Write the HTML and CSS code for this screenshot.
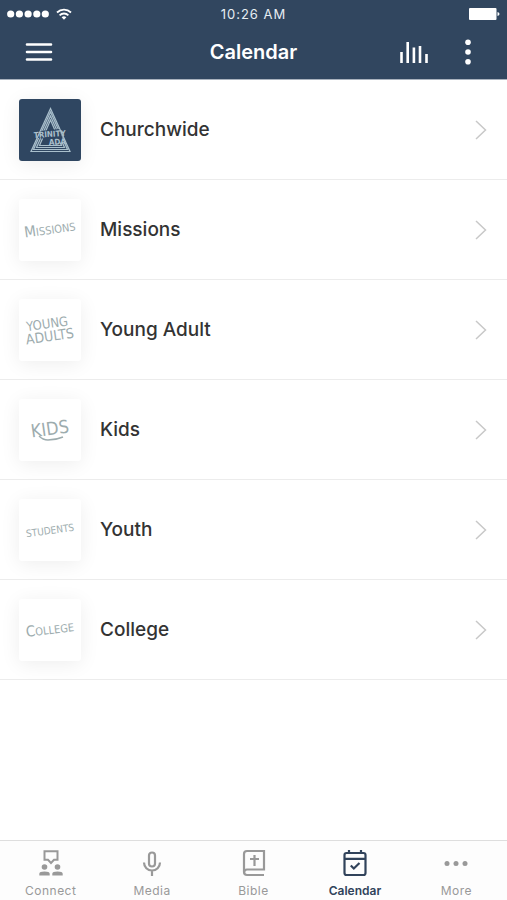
FILE: index.html
```
<!DOCTYPE html>
<html lang="en">
<head>
<meta charset="UTF-8">
<meta name="viewport" content="width=device-width, initial-scale=1.0">
<title>Calendar</title>
<link rel="stylesheet" href="styles.css">
</head>
<body>
<header class="header">
    <div class="status-bar">
        <div class="signal">
            <svg width="42" height="8" viewBox="0 0 42 8" fill="currentColor" aria-hidden="true">
                <circle cx="3.7" cy="4" r="3.6"/><circle cx="12.4" cy="4" r="3.6"/><circle cx="21.1" cy="4" r="3.6"/><circle cx="29.8" cy="4" r="3.6"/><circle cx="38.3" cy="4" r="3.6"/>
            </svg>
            <svg width="16" height="12" viewBox="0 0 16 12" fill="none" stroke="currentColor" stroke-width="1.8" aria-hidden="true">
                <path d="M1 4.5a10.2 10.2 0 0 1 14 0M3.6 7.3a6.3 6.3 0 0 1 8.8 0"/>
                <path d="M8 11.7L5.6 9.2a3.6 3.6 0 0 1 4.8 0z" fill="currentColor" stroke="none"/>
            </svg>
        </div>
        <span class="time">10:26 AM</span>
        <svg class="battery" width="31" height="12" viewBox="0 0 31 12" fill="currentColor" aria-hidden="true">
            <rect width="27.5" height="12" rx="1"/><path d="M28.5 4q2 .5 2 2t-2 2z"/>
        </svg>
    </div>
    <div class="title-bar">
        <button type="button" class="icon-button" aria-label="Menu">
            <svg width="28" height="20" viewBox="0 0 28 20" stroke="currentColor" stroke-width="2.6" stroke-linecap="round"><path d="M2 2.5h24M2 10h24M2 17.5h24"/></svg>
        </button>
        <h1>Calendar</h1>
        <div class="actions">
            <button type="button" class="icon-button" aria-label="Audio player">
                <svg width="28" height="22" viewBox="0 0 28 22" stroke="currentColor" stroke-width="2.6"><path d="M1.5 11v11M7.7 1v21M13.9 6.5V22M20 5v17M26.5 13v9"/></svg>
            </button>
            <button type="button" class="icon-button" aria-label="Options">
                <svg width="8" height="26" viewBox="0 0 8 26" fill="currentColor"><circle cx="4" cy="3.3" r="2.8"/><circle cx="4" cy="13" r="2.8"/><circle cx="4" cy="22.7" r="2.8"/></svg>
            </button>
        </div>
    </div>
</header>

<main>
    <ul class="list">
        <li><a class="row" href="#churchwide">
            <svg class="thumb thumb-dark" viewBox="0 0 62 62" aria-hidden="true">
                <g fill="none" stroke="#a9bfcc" stroke-width="1.2">
                    <path d="M31.5 9.5L12 52.5H51zM31.5 13L14.5 50.5H48.5zM31.5 17L17.5 48.5H45.5zM31.5 21L20.5 46.5H42.5z"/>
                </g>
                <path class="thumb-band" d="M22 32l18-2 5 13-15 2-2-5-9-1z"/>
                <text class="logo-text" x="15" y="39" transform="rotate(-4 15 39)">TRINITY</text>
                <text class="logo-text" x="30" y="46" transform="rotate(-3 30 46)">ADA</text>
            </svg>
            <span class="name">Churchwide</span>
            <svg class="chevron" width="12" height="20" viewBox="0 0 12 20"><path d="M1 1l9.5 9L1 19"/></svg>
        </a></li>
        <li><a class="row" href="#missions">
            <svg class="thumb" viewBox="0 0 62 62" aria-hidden="true">
                <text x="31" y="35" transform="rotate(-8 31 31)"><tspan class="initial">M</tspan>ISSIONS</text>
            </svg>
            <span class="name">Missions</span>
            <svg class="chevron" width="12" height="20" viewBox="0 0 12 20"><path d="M1 1l9.5 9L1 19"/></svg>
        </a></li>
        <li><a class="row" href="#young-adult">
            <svg class="thumb" viewBox="0 0 62 62" aria-hidden="true">
                <g transform="rotate(-8 31 31)"><text class="young" x="29" y="29">YOUNG</text><text class="adults" x="30" y="42">ADULTS</text></g>
            </svg>
            <span class="name">Young Adult</span>
            <svg class="chevron" width="12" height="20" viewBox="0 0 12 20"><path d="M1 1l9.5 9L1 19"/></svg>
        </a></li>
        <li><a class="row" href="#kids">
            <svg class="thumb" viewBox="0 0 62 62" aria-hidden="true">
                <text class="kids" x="31" y="36" transform="rotate(-8 31 31)">KIDS</text>
                <path class="swash" d="M20 37q4 4 9 4 8 0 15-3"/>
            </svg>
            <span class="name">Kids</span>
            <svg class="chevron" width="12" height="20" viewBox="0 0 12 20"><path d="M1 1l9.5 9L1 19"/></svg>
        </a></li>
        <li><a class="row" href="#youth">
            <svg class="thumb" viewBox="0 0 62 62" aria-hidden="true">
                <text class="students" x="31" y="35" transform="rotate(-8 31 31)">STUDENTS</text>
            </svg>
            <span class="name">Youth</span>
            <svg class="chevron" width="12" height="20" viewBox="0 0 12 20"><path d="M1 1l9.5 9L1 19"/></svg>
        </a></li>
        <li><a class="row" href="#college">
            <svg class="thumb" viewBox="0 0 62 62" aria-hidden="true">
                <text x="31" y="35" transform="rotate(-7 31 31)"><tspan class="initial">C</tspan>OLLEGE</text>
            </svg>
            <span class="name">College</span>
            <svg class="chevron" width="12" height="20" viewBox="0 0 12 20"><path d="M1 1l9.5 9L1 19"/></svg>
        </a></li>
    </ul>
</main>

<nav class="tabs">
    <a class="tab" href="#connect">
        <svg width="26" height="28" viewBox="0 0 26 28" fill="currentColor" aria-hidden="true">
            <path d="M6.5 2.2h13v8.6H16l-3 3.2-3-3.2H6.5z" fill="none" stroke="currentColor" stroke-width="2"/>
            <circle cx="6.5" cy="18" r="2.8"/><circle cx="19.5" cy="18" r="2.8"/>
            <path d="M1.3 26.5v-1.8q0-2.2 5.2-2.2t5.2 2.2v1.8zM14.3 26.5v-1.8q0-2.2 5.2-2.2t5.2 2.2v1.8z"/>
        </svg>
        <span>Connect</span>
    </a>
    <a class="tab" href="#media">
        <svg width="26" height="28" viewBox="0 0 26 28" fill="none" stroke="currentColor" stroke-width="2.2" aria-hidden="true">
            <rect x="10" y="3.5" width="6" height="14" rx="3"/><path d="M5 13.5a8 8 0 0 0 16 0M13 21.5V27"/>
        </svg>
        <span>Media</span>
    </a>
    <a class="tab" href="#bible">
        <svg width="26" height="28" viewBox="0 0 26 28" fill="none" stroke="currentColor" stroke-width="2.2" aria-hidden="true">
            <path d="M23 26H6a3 3 0 0 1-3-3V5a3 3 0 0 1 3-3h17v18.5H6A2.7 2.7 0 0 0 6 26M13.5 6v11M9 10h9"/>
        </svg>
        <span>Bible</span>
    </a>
    <a class="tab active" href="#calendar" aria-current="page">
        <svg width="26" height="28" viewBox="0 0 26 28" fill="none" stroke="currentColor" stroke-width="2.2" aria-hidden="true">
            <rect x="2.5" y="4" width="21" height="22" rx="2"/><path d="M2.5 9.8h21M7 1v4M19 1v4M8.8 16.5l3 3L17.5 14"/>
        </svg>
        <span>Calendar</span>
    </a>
    <a class="tab" href="#more">
        <svg width="26" height="28" viewBox="0 0 26 28" fill="currentColor" aria-hidden="true">
            <circle cx="4" cy="14.5" r="2.5"/><circle cx="13" cy="14.5" r="2.5"/><circle cx="22" cy="14.5" r="2.5"/>
        </svg>
        <span>More</span>
    </a>
</nav>
</body>
</html>
```
FILE: styles.css
```
* {
    box-sizing: border-box;
}

body {
    font-family: Inter, "Liberation Sans", sans-serif;
    background-color: #fff;
    color: #333;
    margin: 0;
    min-height: 100vh;
    display: flex;
    flex-direction: column;
}

.header {
    background-color: #31465f;
    color: #fff;
    border-bottom: 1px solid #a9b2bd;
}

.status-bar,
.title-bar {
    display: grid;
    grid-template-columns: 1fr auto 1fr;
    align-items: center;
}

.status-bar {
    height: 27px;
    padding: 0 7px;
}

.signal {
    display: flex;
    align-items: center;
    gap: 7px;
}

.time {
    font-size: 13px;
    letter-spacing: 1px;
    color: #e6edf3;
}

.battery {
    justify-self: end;
}

.title-bar {
    height: 52px;
    padding: 0 25px 2px;
}

h1 {
    font-size: 20px;
    font-weight: 600;
    margin: 0;
}

.icon-button {
    display: flex;
    justify-self: start;
    padding: 0;
    border: none;
    background: none;
    color: #fff;
    cursor: pointer;
}

.actions {
    display: flex;
    align-items: center;
    justify-content: flex-end;
    gap: 36px;
    padding-right: 10px;
}

main {
    flex: 1;
}

.list {
    list-style: none;
    margin: 0;
    padding: 0;
}

.row {
    display: flex;
    align-items: center;
    height: 100px;
    padding: 0 20px 0 19px;
    border-bottom: 1px solid #ececec;
    color: #333;
    text-decoration: none;
}

.thumb {
    width: 62px;
    height: 62px;
    margin-right: 19px;
    border-radius: 3px;
    background-color: #fff;
    box-shadow: 0 3px 20px rgba(0, 0, 0, 0.07);
    font-family: "DejaVu Sans Condensed", Lato, sans-serif;
    font-size: 11px;
    fill: #9dacae;
    text-anchor: middle;
}

.thumb-dark {
    background-color: #2f4661;
}

.thumb-band {
    fill: #2f4661;
}

.initial {
    font-size: 15px;
}

.young {
    font-size: 13px;
}

.adults {
    font-size: 14px;
}

.kids {
    font-size: 18px;
}

.students {
    font-size: 10px;
}

.logo-text {
    font-size: 8px;
    font-weight: bold;
    fill: #a9bfcc;
    text-anchor: start;
}

.swash {
    fill: none;
    stroke: #9dacae;
    stroke-width: 1.5;
}

.name {
    flex: 1;
    font-size: 19px;
    font-weight: 500;
}

.chevron {
    fill: none;
    stroke: #c8c8c8;
    stroke-width: 1.5;
}

.tabs {
    display: flex;
    height: 60px;
    border-top: 1px solid #dedede;
    background-color: #fdfdfd;
}

.tab {
    flex: 1;
    display: flex;
    flex-direction: column;
    align-items: center;
    gap: 6px;
    padding-top: 8px;
    color: #999;
    font-size: 12px;
    line-height: 16px;
    letter-spacing: 0.5px;
    text-decoration: none;
}

.active {
    color: #31435b;
    font-weight: 600;
    letter-spacing: 0;
}
```
